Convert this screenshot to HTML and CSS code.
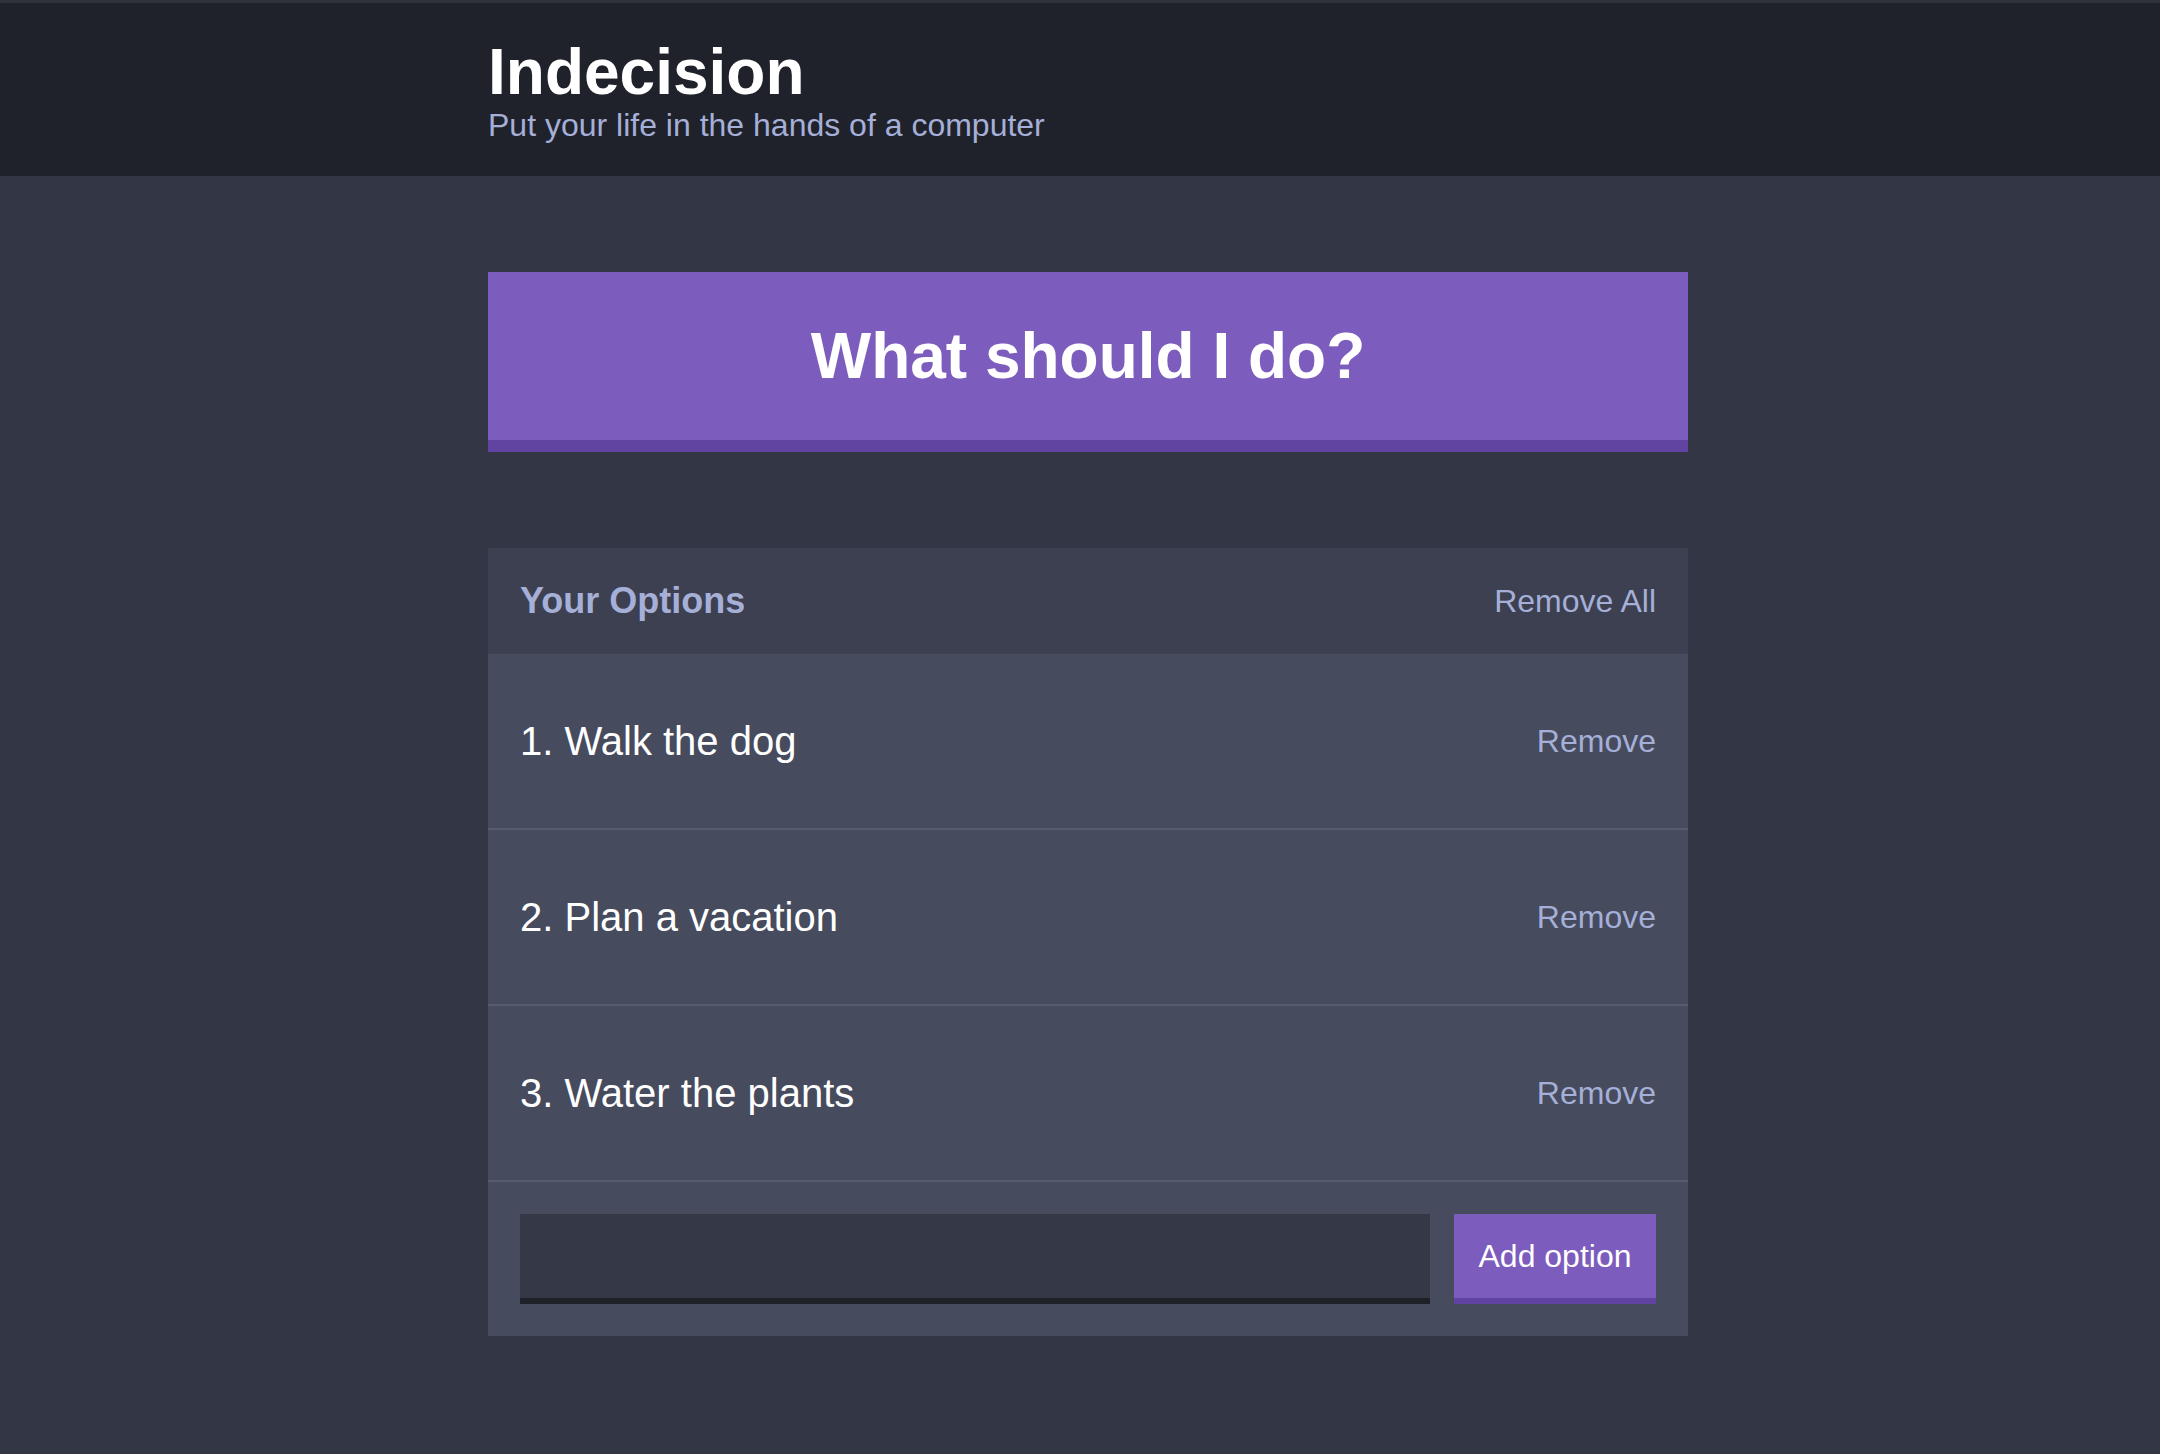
FILE: index.html
```html
<!DOCTYPE html>
<html lang="en">
<head>
<meta charset="utf-8">
<title>Indecision</title>
<link rel="stylesheet" href="styles.css">
</head>
<body>
<header class="header">
  <div class="container">
    <h1 class="header-title">Indecision</h1>
    <h2 class="header-subtitle">Put your life in the hands of a computer</h2>
  </div>
</header>
<main class="container main">
  <button class="big-button">What should I do?</button>
  <section class="widget">
    <div class="widget-header">
      <h3 class="widget-title">Your Options</h3>
      <button class="link-button">Remove All</button>
    </div>
    <div class="option">
      <p class="option-text">1. Walk the dog</p>
      <button class="link-button">Remove</button>
    </div>
    <div class="option">
      <p class="option-text">2. Plan a vacation</p>
      <button class="link-button">Remove</button>
    </div>
    <div class="option">
      <p class="option-text">3. Water the plants</p>
      <button class="link-button">Remove</button>
    </div>
    <form class="add-option">
      <input class="add-option-input" type="text" name="option">
      <button class="button" type="button">Add option</button>
    </form>
  </section>
</main>
</body>
</html>
```

FILE: styles.css
```css
* { box-sizing: border-box; }
html, body {
  margin: 0;
  padding: 0;
  background: #333745;
  font-family: "Liberation Sans", Arial, Helvetica, sans-serif;
  color: #ffffff;
}
body { min-height: 1454px; }

.container {
  width: 1200px;
  margin-left: calc(50% - 592px);
  margin-right: auto;
}

.header {
  background: #20222b;
  border-top: 3px solid #303239;
  padding: 37px 0 35px;
}
.header-title {
  margin: 0;
  font-size: 64px;
  line-height: 1;
  font-weight: 700;
  color: #ffffff;
}
.header-subtitle {
  margin: 5px 0 0;
  font-size: 32px;
  line-height: 1;
  font-weight: 400;
  color: #a5afd7;
}

.main {
  padding-top: 96px;
  display: flex;
  flex-direction: column;
  gap: 96px;
}

.big-button {
  display: flex;
  align-items: center;
  justify-content: center;
  width: 100%;
  height: 180px;
  margin: 0;
  padding: 0;
  border: none;
  border-bottom: 12px solid #6144a1;
  background: #7c5cbd;
  color: #ffffff;
  font-family: inherit;
  font-size: 64px;
  font-weight: 700;
  line-height: 1;
}

.widget {
  background: #464b5e;
}
.widget-header {
  display: flex;
  align-items: center;
  justify-content: space-between;
  height: 106px;
  padding: 0 32px;
  background: #3c4050;
}
.widget-title {
  margin: 0;
  font-size: 36px;
  font-weight: 700;
  line-height: 1;
  color: #a5afd7;
}
.link-button {
  margin: 0;
  padding: 0;
  border: none;
  background: none;
  font-family: inherit;
  font-size: 32px;
  line-height: 1;
  color: #a5afd7;
}

.option {
  display: flex;
  align-items: center;
  justify-content: space-between;
  height: 176px;
  padding: 0 32px;
  border-bottom: 2px solid #575b70;
}
.option-text {
  margin: 0;
  font-size: 40px;
  line-height: 1;
  color: #ffffff;
}

.add-option {
  display: flex;
  gap: 24px;
  padding: 32px;
}
.add-option-input {
  flex: 1;
  height: 90px;
  margin: 0;
  padding: 0 24px;
  border: none;
  border-bottom: 6px solid #1f2128;
  background: #353846;
  color: #a5afd7;
  font-family: inherit;
  font-size: 32px;
  outline: none;
}
.button {
  width: 202px;
  height: 90px;
  margin: 0;
  padding: 0 24px;
  border: none;
  border-bottom: 6px solid #6144a1;
  background: #7c5cbd;
  color: #ffffff;
  font-family: inherit;
  font-size: 32px;
  line-height: 1;
}
```
